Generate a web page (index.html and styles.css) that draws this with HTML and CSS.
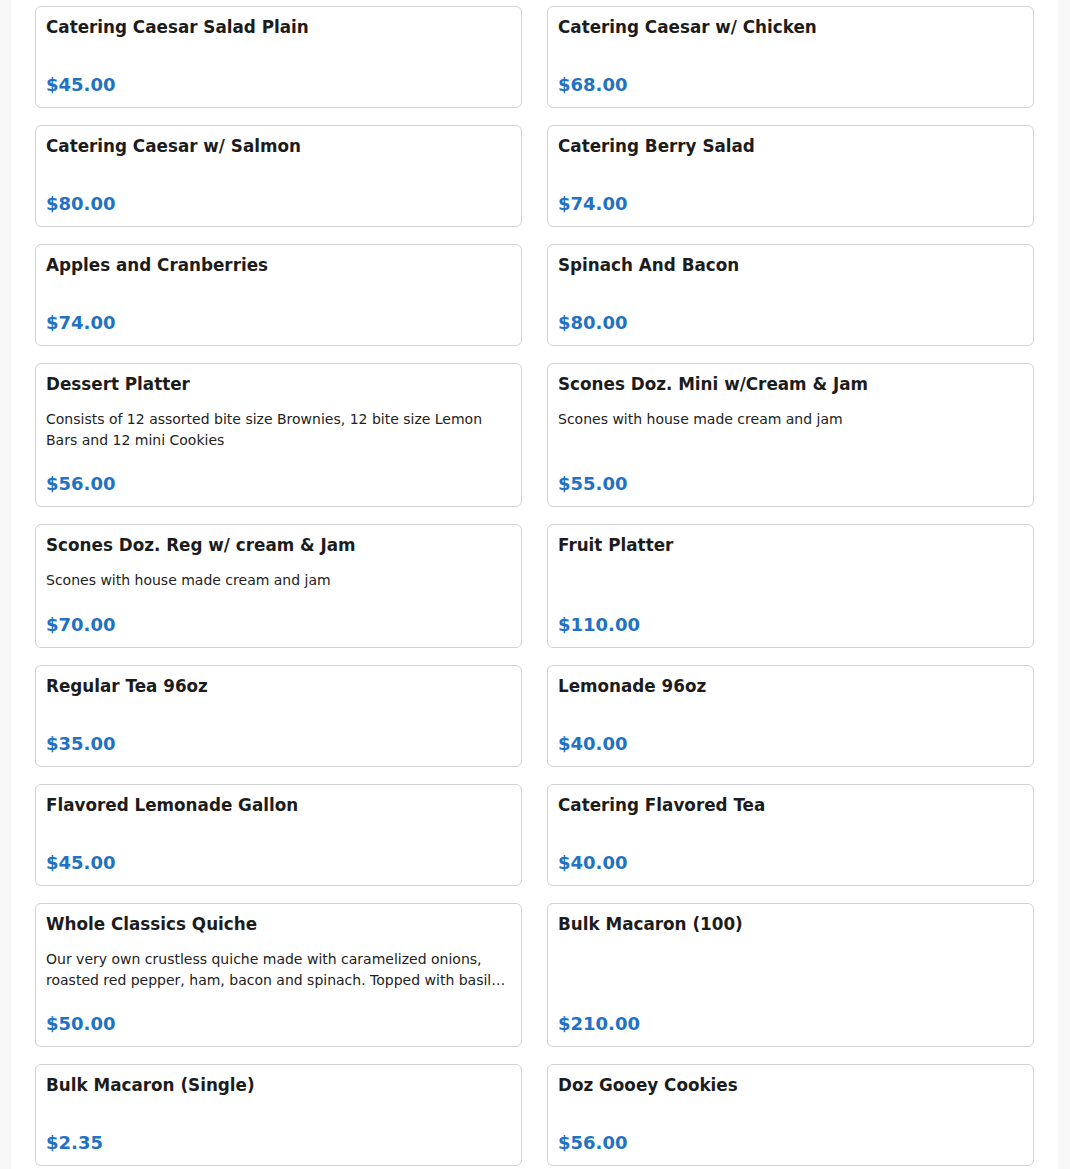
FILE: index.html
```html
<!DOCTYPE html>
<html lang="en">
<head>
<meta charset="utf-8">
<title>Catering Menu</title>
<link rel="stylesheet" href="styles.css">
</head>
<body>
<main class="page">
  <div class="grid">
    <div class="card"><h3 class="title">Catering Caesar Salad Plain</h3><p class="desc"></p><div class="price">$45.00</div></div>
    <div class="card"><h3 class="title">Catering Caesar w/ Chicken</h3><p class="desc"></p><div class="price">$68.00</div></div>
    <div class="card"><h3 class="title">Catering Caesar w/ Salmon</h3><p class="desc"></p><div class="price">$80.00</div></div>
    <div class="card"><h3 class="title">Catering Berry Salad</h3><p class="desc"></p><div class="price">$74.00</div></div>
    <div class="card"><h3 class="title">Apples and Cranberries</h3><p class="desc"></p><div class="price">$74.00</div></div>
    <div class="card"><h3 class="title">Spinach And Bacon</h3><p class="desc"></p><div class="price">$80.00</div></div>
    <div class="card"><h3 class="title">Dessert Platter</h3><p class="desc">Consists of 12 assorted bite size Brownies, 12 bite size Lemon Bars and 12 mini Cookies</p><div class="price">$56.00</div></div>
    <div class="card"><h3 class="title">Scones Doz. Mini w/Cream &amp; Jam</h3><p class="desc">Scones with house made cream and jam</p><div class="price">$55.00</div></div>
    <div class="card"><h3 class="title">Scones Doz. Reg w/ cream &amp; Jam</h3><p class="desc">Scones with house made cream and jam</p><div class="price">$70.00</div></div>
    <div class="card"><h3 class="title">Fruit Platter</h3><p class="desc"></p><div class="price">$110.00</div></div>
    <div class="card"><h3 class="title">Regular Tea 96oz</h3><p class="desc"></p><div class="price">$35.00</div></div>
    <div class="card"><h3 class="title">Lemonade 96oz</h3><p class="desc"></p><div class="price">$40.00</div></div>
    <div class="card"><h3 class="title">Flavored Lemonade Gallon</h3><p class="desc"></p><div class="price">$45.00</div></div>
    <div class="card"><h3 class="title">Catering Flavored Tea</h3><p class="desc"></p><div class="price">$40.00</div></div>
    <div class="card"><h3 class="title">Whole Classics Quiche</h3><p class="desc clamp">Our very own crustless quiche made with caramelized onions, roasted red pepper, ham, bacon and spinach. Topped with basil pesto and served with a side of fresh fruit.</p><div class="price">$50.00</div></div>
    <div class="card"><h3 class="title">Bulk Macaron (100)</h3><p class="desc"></p><div class="price">$210.00</div></div>
    <div class="card"><h3 class="title">Bulk Macaron (Single)</h3><p class="desc"></p><div class="price">$2.35</div></div>
    <div class="card"><h3 class="title">Doz Gooey Cookies</h3><p class="desc"></p><div class="price">$56.00</div></div>
  </div>
</main>
</body>
</html>
```

FILE: styles.css
```css
html, body {
  margin: 0;
  padding: 0;
  background: #f8f8f8;
}

body {
  font-family: "DejaVu Sans", "Liberation Sans", sans-serif;
  color: #1c1c1c;
}

.page {
  margin: 0 12px 0 11px;
  background: #ffffff;
  padding: 6px 24px 24px;
}

.grid {
  display: grid;
  grid-template-columns: 1fr 1fr;
  column-gap: 25px;
  row-gap: 17px;
}

.card {
  display: flex;
  flex-direction: column;
  border: 1px solid #d2d2d2;
  border-radius: 6px;
  padding: 10px 10px 12px;
  background: #fff;
}

.title {
  margin: 0 0 14px;
  font-size: 16.8px;
  font-weight: bold;
  line-height: 21px;
  color: #1c1c1c;
}

.desc {
  margin: 0 0 22.3px;
  font-size: 14px;
  line-height: 21px;
  color: #222;
}

.desc:empty {
  margin-bottom: 22px;
}

.clamp {
  display: -webkit-box;
  -webkit-line-clamp: 2;
  -webkit-box-orient: vertical;
  overflow: hidden;
}

.price {
  margin-top: auto;
  font-size: 18px;
  font-weight: bold;
  line-height: 21px;
  color: #2272c3;
}
```
